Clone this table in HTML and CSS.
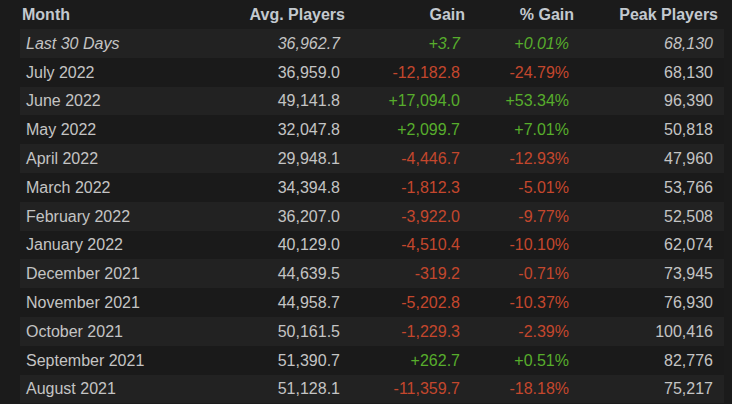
FILE: index.html
```html
<!DOCTYPE html>
<html>
<head>
<meta charset="utf-8">
<link rel="stylesheet" href="styles.css">
</head>
<body>
<div class="wrap">
  <div class="table">
    <div class="row head">
      <div class="c month">Month</div>
      <div class="c num">Avg. Players</div>
      <div class="c num">Gain</div>
      <div class="c num">% Gain</div>
      <div class="c num">Peak Players</div>
    </div>
    <div class="row odd italic">
      <div class="c month">Last 30 Days</div>
      <div class="c num">36,962.7</div>
      <div class="c num up">+3.7</div>
      <div class="c num up">+0.01%</div>
      <div class="c num">68,130</div>
    </div>
    <div class="row even">
      <div class="c month">July 2022</div>
      <div class="c num">36,959.0</div>
      <div class="c num down">-12,182.8</div>
      <div class="c num down">-24.79%</div>
      <div class="c num">68,130</div>
    </div>
    <div class="row odd">
      <div class="c month">June 2022</div>
      <div class="c num">49,141.8</div>
      <div class="c num up">+17,094.0</div>
      <div class="c num up">+53.34%</div>
      <div class="c num">96,390</div>
    </div>
    <div class="row even">
      <div class="c month">May 2022</div>
      <div class="c num">32,047.8</div>
      <div class="c num up">+2,099.7</div>
      <div class="c num up">+7.01%</div>
      <div class="c num">50,818</div>
    </div>
    <div class="row odd">
      <div class="c month">April 2022</div>
      <div class="c num">29,948.1</div>
      <div class="c num down">-4,446.7</div>
      <div class="c num down">-12.93%</div>
      <div class="c num">47,960</div>
    </div>
    <div class="row even">
      <div class="c month">March 2022</div>
      <div class="c num">34,394.8</div>
      <div class="c num down">-1,812.3</div>
      <div class="c num down">-5.01%</div>
      <div class="c num">53,766</div>
    </div>
    <div class="row odd">
      <div class="c month">February 2022</div>
      <div class="c num">36,207.0</div>
      <div class="c num down">-3,922.0</div>
      <div class="c num down">-9.77%</div>
      <div class="c num">52,508</div>
    </div>
    <div class="row even">
      <div class="c month">January 2022</div>
      <div class="c num">40,129.0</div>
      <div class="c num down">-4,510.4</div>
      <div class="c num down">-10.10%</div>
      <div class="c num">62,074</div>
    </div>
    <div class="row odd">
      <div class="c month">December 2021</div>
      <div class="c num">44,639.5</div>
      <div class="c num down">-319.2</div>
      <div class="c num down">-0.71%</div>
      <div class="c num">73,945</div>
    </div>
    <div class="row even">
      <div class="c month">November 2021</div>
      <div class="c num">44,958.7</div>
      <div class="c num down">-5,202.8</div>
      <div class="c num down">-10.37%</div>
      <div class="c num">76,930</div>
    </div>
    <div class="row odd">
      <div class="c month">October 2021</div>
      <div class="c num">50,161.5</div>
      <div class="c num down">-1,229.3</div>
      <div class="c num down">-2.39%</div>
      <div class="c num">100,416</div>
    </div>
    <div class="row even">
      <div class="c month">September 2021</div>
      <div class="c num">51,390.7</div>
      <div class="c num up">+262.7</div>
      <div class="c num up">+0.51%</div>
      <div class="c num">82,776</div>
    </div>
    <div class="row odd">
      <div class="c month">August 2021</div>
      <div class="c num">51,128.1</div>
      <div class="c num down">-11,359.7</div>
      <div class="c num down">-18.18%</div>
      <div class="c num">75,217</div>
    </div>
  </div>
</div>
</body>
</html>
```
FILE: styles.css
```css
html, body {
  margin: 0;
  padding: 0;
  height: 100%;
  overflow: hidden;
}
body {
  background: #1b1b1b;
  font-family: "Liberation Sans", Arial, sans-serif;
  font-size: 16px;
  color: #c4c4c4;
}
.wrap {
  padding: 0 8px 0 20px;
}
.table {
  width: 704px;
}
.row {
  display: grid;
  grid-template-columns: 180px 151px 120px 109px 144px;
  height: 28.8px;
  align-items: center;
  padding-top: 1px;
  box-sizing: border-box;
}
.row.head {
  height: 29px;
  font-weight: bold;
  color: #c3c9cf;
}
.row.odd {
  background: #222222;
}
.row.even {
  background: #1a1a1a;
}
.italic {
  font-style: italic;
}
.c {
  white-space: nowrap;
  line-height: 18px;
}
.month {
  padding-left: 6px;
}
.num {
  text-align: right;
  padding-right: 11px;
}
.head .month {
  padding-left: 2px;
}
.head .num {
  padding-right: 6px;
}
.up {
  color: #57ad2c;
}
.down {
  color: #c4472d;
}
```
